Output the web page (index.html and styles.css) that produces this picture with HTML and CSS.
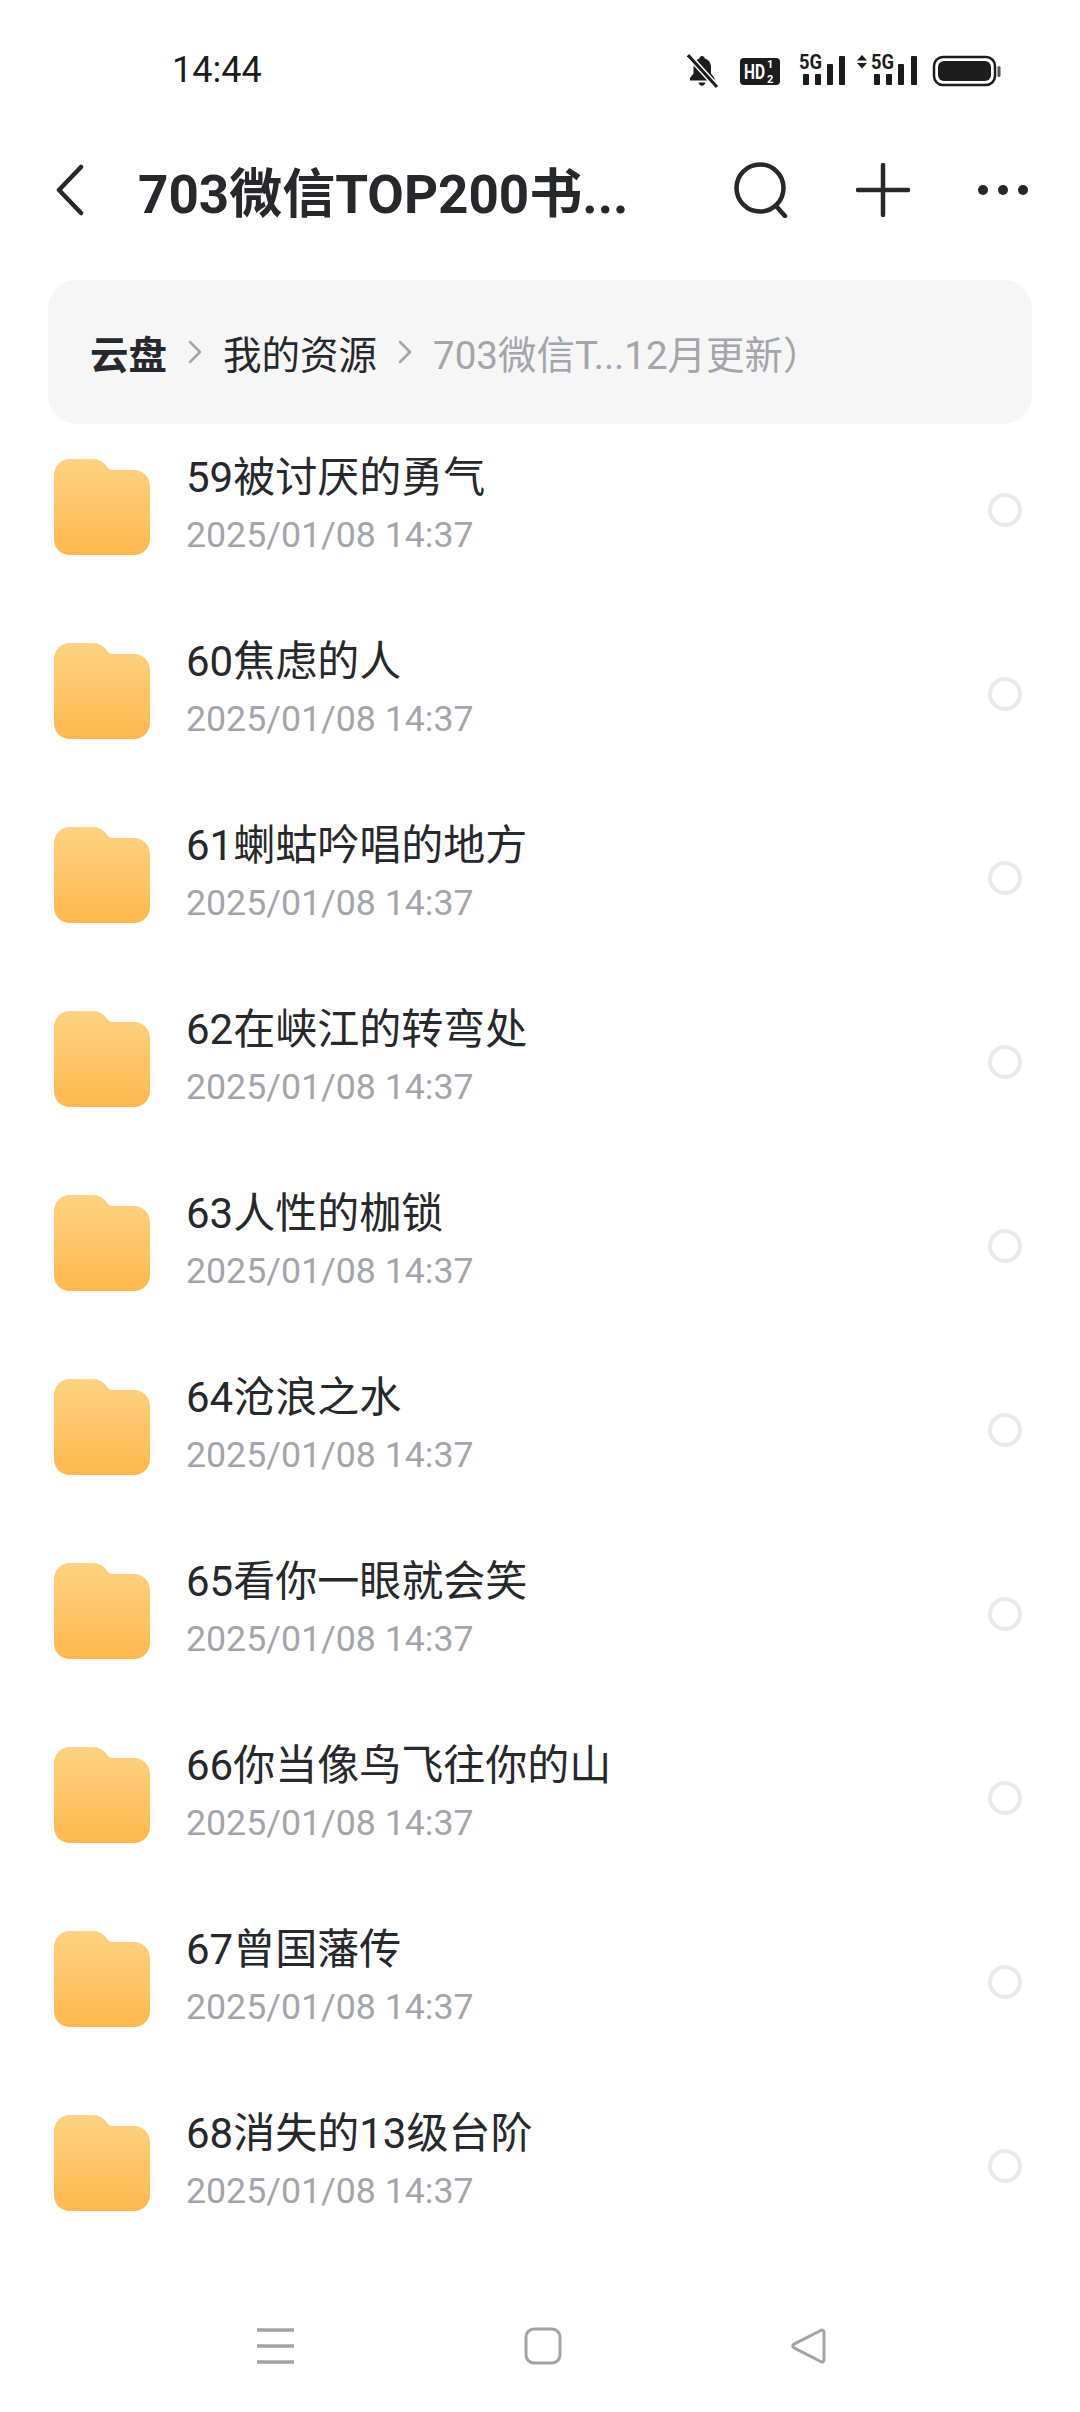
FILE: index.html
```html
<!DOCTYPE html>
<html lang="zh-CN">
<head>
    <meta charset="UTF-8">
    <meta name="viewport" content="width=device-width, initial-scale=1.0">
    <title>云盘</title>
    <link rel="stylesheet" href="styles.css">
</head>
<body>

<!-- Barra de estado -->
<div class="status-bar">
    <span class="hora">14:44</span>
    <svg class="status-iconos" width="314" height="44" viewBox="0 -4 314 44">
        <path d="M15 4c1.600 0 2.500 1 2.700 2.400 4.300 1.200 6.300 4.600 6.300 9v6l3.500 4.500v2.600H3v-2.600L6.500 21.400v-6c0-4.400 2-7.800 6-9C12.700 5 13.500 4 15 4z" fill="#1c1c1c"/>
        <path d="M11.500 30.500h7c-.4 2-1.800 3.200-3.500 3.200s-3.100-1.200-3.500-3.200z" fill="#1c1c1c"/>
        <path d="M1 3l29 32" stroke="#fff" stroke-width="6"/>
        <path d="M1 3l29 32" stroke="#1c1c1c" stroke-width="3"/>

        <rect x="53" y="6" width="40" height="27" rx="4" fill="#1c1c1c"/>
        <text class="st-hd" x="57" y="27" textLength="21" lengthAdjust="spacingAndGlyphs">HD</text>
        <text class="st-mini" x="80" y="16">1</text>
        <text class="st-mini" x="80" y="31">2</text>

        <text class="st-5g" x="112" y="17" textLength="23" lengthAdjust="spacingAndGlyphs">5G</text>
        <rect x="116" y="22" width="6" height="11" rx="1" fill="#1c1c1c"/>
        <rect x="128" y="22" width="6" height="11" rx="1" fill="#1c1c1c"/>
        <rect x="140" y="12" width="6" height="21" rx="1" fill="#1c1c1c"/>
        <rect x="152" y="4" width="6" height="29" rx="1" fill="#1c1c1c"/>

        <path d="M175 3l5 5.500h-10zM175 16.500l-5-5.500h10z" fill="#1c1c1c"/>
        <text class="st-5g" x="184" y="17" textLength="23" lengthAdjust="spacingAndGlyphs">5G</text>
        <rect x="187" y="22" width="6" height="11" rx="1" fill="#1c1c1c"/>
        <rect x="199" y="22" width="6" height="11" rx="1" fill="#1c1c1c"/>
        <rect x="211" y="12" width="6" height="21" rx="1" fill="#1c1c1c"/>
        <rect x="224" y="4" width="6" height="29" rx="1" fill="#1c1c1c"/>

        <rect x="247" y="5" width="61" height="28" rx="9" fill="none" stroke="#1c1c1c" stroke-width="2.500"/>
        <rect x="251" y="9" width="53" height="20" rx="6" fill="#1c1c1c"/>
        <rect x="310.500" y="14" width="3" height="11" rx="1.500" fill="#555"/>
    </svg>
</div>

<!-- Cabecera -->
<header class="cabecera">
    <svg class="ico-volver" width="30" height="52" viewBox="0 0 30 52">
        <path d="M26 3L4 26l22 23" fill="none" stroke="#26282b" stroke-width="4.500" stroke-linecap="round" stroke-linejoin="round"/>
    </svg>
    <h1 class="titulo">703微信TOP200书...</h1>
    <div class="acciones">
        <svg width="56" height="56" viewBox="0 0 56 56">
            <circle cx="27" cy="26" r="23.500" fill="none" stroke="#26282b" stroke-width="4.500"/>
            <path d="M43 44l9 10" fill="none" stroke="#26282b" stroke-width="4.500" stroke-linecap="round"/>
        </svg>
        <svg width="54" height="54" viewBox="0 0 54 54">
            <path d="M27 2v50M2 27h50" fill="none" stroke="#26282b" stroke-width="4.500" stroke-linecap="round"/>
        </svg>
        <svg width="52" height="12" viewBox="0 0 52 12">
            <circle cx="6" cy="6" r="5" fill="#26282b"/>
            <circle cx="26" cy="6" r="5" fill="#26282b"/>
            <circle cx="46" cy="6" r="5" fill="#26282b"/>
        </svg>
    </div>
</header>

<!-- Ruta -->
<nav class="ruta">
    <span class="ruta-raiz">云盘</span>
    <svg class="ruta-sep" width="16" height="26" viewBox="0 0 16 26"><path d="M3 3l10 10L3 23" fill="none" stroke="#a3a5aa" stroke-width="2.500" stroke-linecap="round" stroke-linejoin="round"/></svg>
    <span>我的资源</span>
    <svg class="ruta-sep" width="16" height="26" viewBox="0 0 16 26"><path d="M3 3l10 10L3 23" fill="none" stroke="#a3a5aa" stroke-width="2.500" stroke-linecap="round" stroke-linejoin="round"/></svg>
    <span class="ruta-actual">703微信T...12月更新）</span>
</nav>

<!-- Lista de carpetas, se llena desde script.js -->
<ul id="lista-carpetas" class="lista"></ul>

<!-- Barra de navegacion -->
<footer class="nav-sistema">
    <svg width="37" height="36" viewBox="0 0 37 36">
        <path d="M0 2h37M0 18h37M0 34h37" fill="none" stroke="#a3a3a3" stroke-width="3.500"/>
    </svg>
    <svg width="38" height="38" viewBox="0 0 38 38">
        <rect x="2" y="2" width="34" height="34" rx="8" fill="none" stroke="#a3a3a3" stroke-width="3"/>
    </svg>
    <svg width="38" height="38" viewBox="0 0 38 38">
        <path d="M34 5.500v27c0 2-1.600 3-3.300 2L4 20.800c-1.700-1-1.700-2.700 0-3.700L30.700 3.500c1.700-1 3.300 0 3.300 2z" fill="none" stroke="#a3a3a3" stroke-width="3" stroke-linejoin="round"/>
    </svg>
</footer>

<script src="script.js"></script>
</body>
</html>
```

FILE: styles.css
```css
* {
    box-sizing: border-box;
}
body {
    margin: 0;
    width: 1080px;
    height: 2412px;
    overflow: hidden;
    background-color: #fff;
    color: #26282b;
    font-family: Roboto, "Noto Sans CJK SC", sans-serif;
}

/* Barra de estado */
.status-bar {
    height: 140px;
    display: flex;
    align-items: center;
    justify-content: space-between;
    padding: 0 79px 0 172px;
}
.hora {
    font-size: 36px;
    color: #1c1c1c;
}
.st-hd {
    font: 700 20px Roboto, sans-serif;
    fill: #fff;
}
.st-mini {
    font: 700 11px Roboto, sans-serif;
    fill: #fff;
}
.st-5g {
    font: 700 20px Roboto, sans-serif;
    fill: #1c1c1c;
}

/* Cabecera */
.cabecera {
    height: 100px;
    display: flex;
    align-items: center;
    padding: 0 51px 0 55px;
}
.titulo {
    margin: 0 0 0 53px;
    flex: 1;
    font-size: 53px;
    font-weight: 700;
    white-space: nowrap;
}
.acciones {
    display: flex;
    align-items: center;
    gap: 67px;
}

/* Ruta */
.ruta {
    height: 144px;
    margin: 40px 48px 0;
    padding-left: 42px;
    display: flex;
    align-items: center;
    background-color: #f6f6f7;
    border-radius: 28px;
    font-size: 38.5px;
}
.ruta-raiz {
    font-weight: 700;
}
.ruta-sep {
    margin: 0 20px;
}
.ruta-actual {
    color: #a3a5aa;
}

/* Lista */
.lista {
    list-style-type: none;
    margin: -9px 0 0;
    padding: 0;
}
.fila {
    height: 184px;
    display: flex;
    align-items: center;
    padding: 0 58px 0 54px;
}
.carpeta {
    flex: none;
    margin-right: 36px;
}
.fila-texto {
    flex: 1;
    margin-top: -1px;
}
.fila-nombre {
    font-size: 42px;
    line-height: 57px;
}
.fila-fecha {
    margin-top: 1px;
    font-size: 35.7px;
    line-height: 57px;
    color: #a3a5aa;
}
.marca {
    flex: none;
    width: 34px;
    height: 34px;
    border: 4px solid #e9e9ea;
    border-radius: 50%;
    margin-top: 6px;
}

/* Barra de navegacion */
.nav-sistema {
    position: absolute;
    left: 0;
    right: 0;
    bottom: 0;
    height: 132px;
    display: flex;
    align-items: center;
}
.nav-sistema svg {
    flex: none;
}
.nav-sistema svg:nth-child(1) {
    margin-left: 257px;
}
.nav-sistema svg:nth-child(2) {
    margin-left: 230px;
}
.nav-sistema svg:nth-child(3) {
    margin-left: 228px;
}
```

FILE: script.js
```js
// Nombres de las carpetas
const carpetas = [
    '59被讨厌的勇气',
    '60焦虑的人',
    '61蝲蛄吟唱的地方',
    '62在峡江的转弯处',
    '63人性的枷锁',
    '64沧浪之水',
    '65看你一眼就会笑',
    '66你当像鸟飞往你的山',
    '67曾国藩传',
    '68消失的13级台阶'
];

const lista = document.getElementById('lista-carpetas');

carpetas.forEach((nombre, i) => {
    const li = document.createElement('li');
    li.className = 'fila';
    li.innerHTML = `
        <svg class="carpeta" width="96" height="96" viewBox="0 0 96 96">
            <defs>
                <linearGradient id="grad${i}" x1="0" y1="0" x2="0" y2="1">
                    <stop offset="0" stop-color="#fdd283"/>
                    <stop offset="1" stop-color="#ffb84d"/>
                </linearGradient>
            </defs>
            <path d="M16 0h24c4 0 7 1.500 10 4.500 3 3 5 6.500 9 6.500h21c9 0 16 7 16 16v53c0 9-7 16-16 16H16C7 96 0 89 0 80V16C0 7 7 0 16 0z" fill="url(#grad${i})"/>
        </svg>
        <div class="fila-texto">
            <div class="fila-nombre">${nombre}</div>
            <div class="fila-fecha">2025/01/08 14:37</div>
        </div>
        <span class="marca"></span>
    `;
    lista.appendChild(li);
});
```
